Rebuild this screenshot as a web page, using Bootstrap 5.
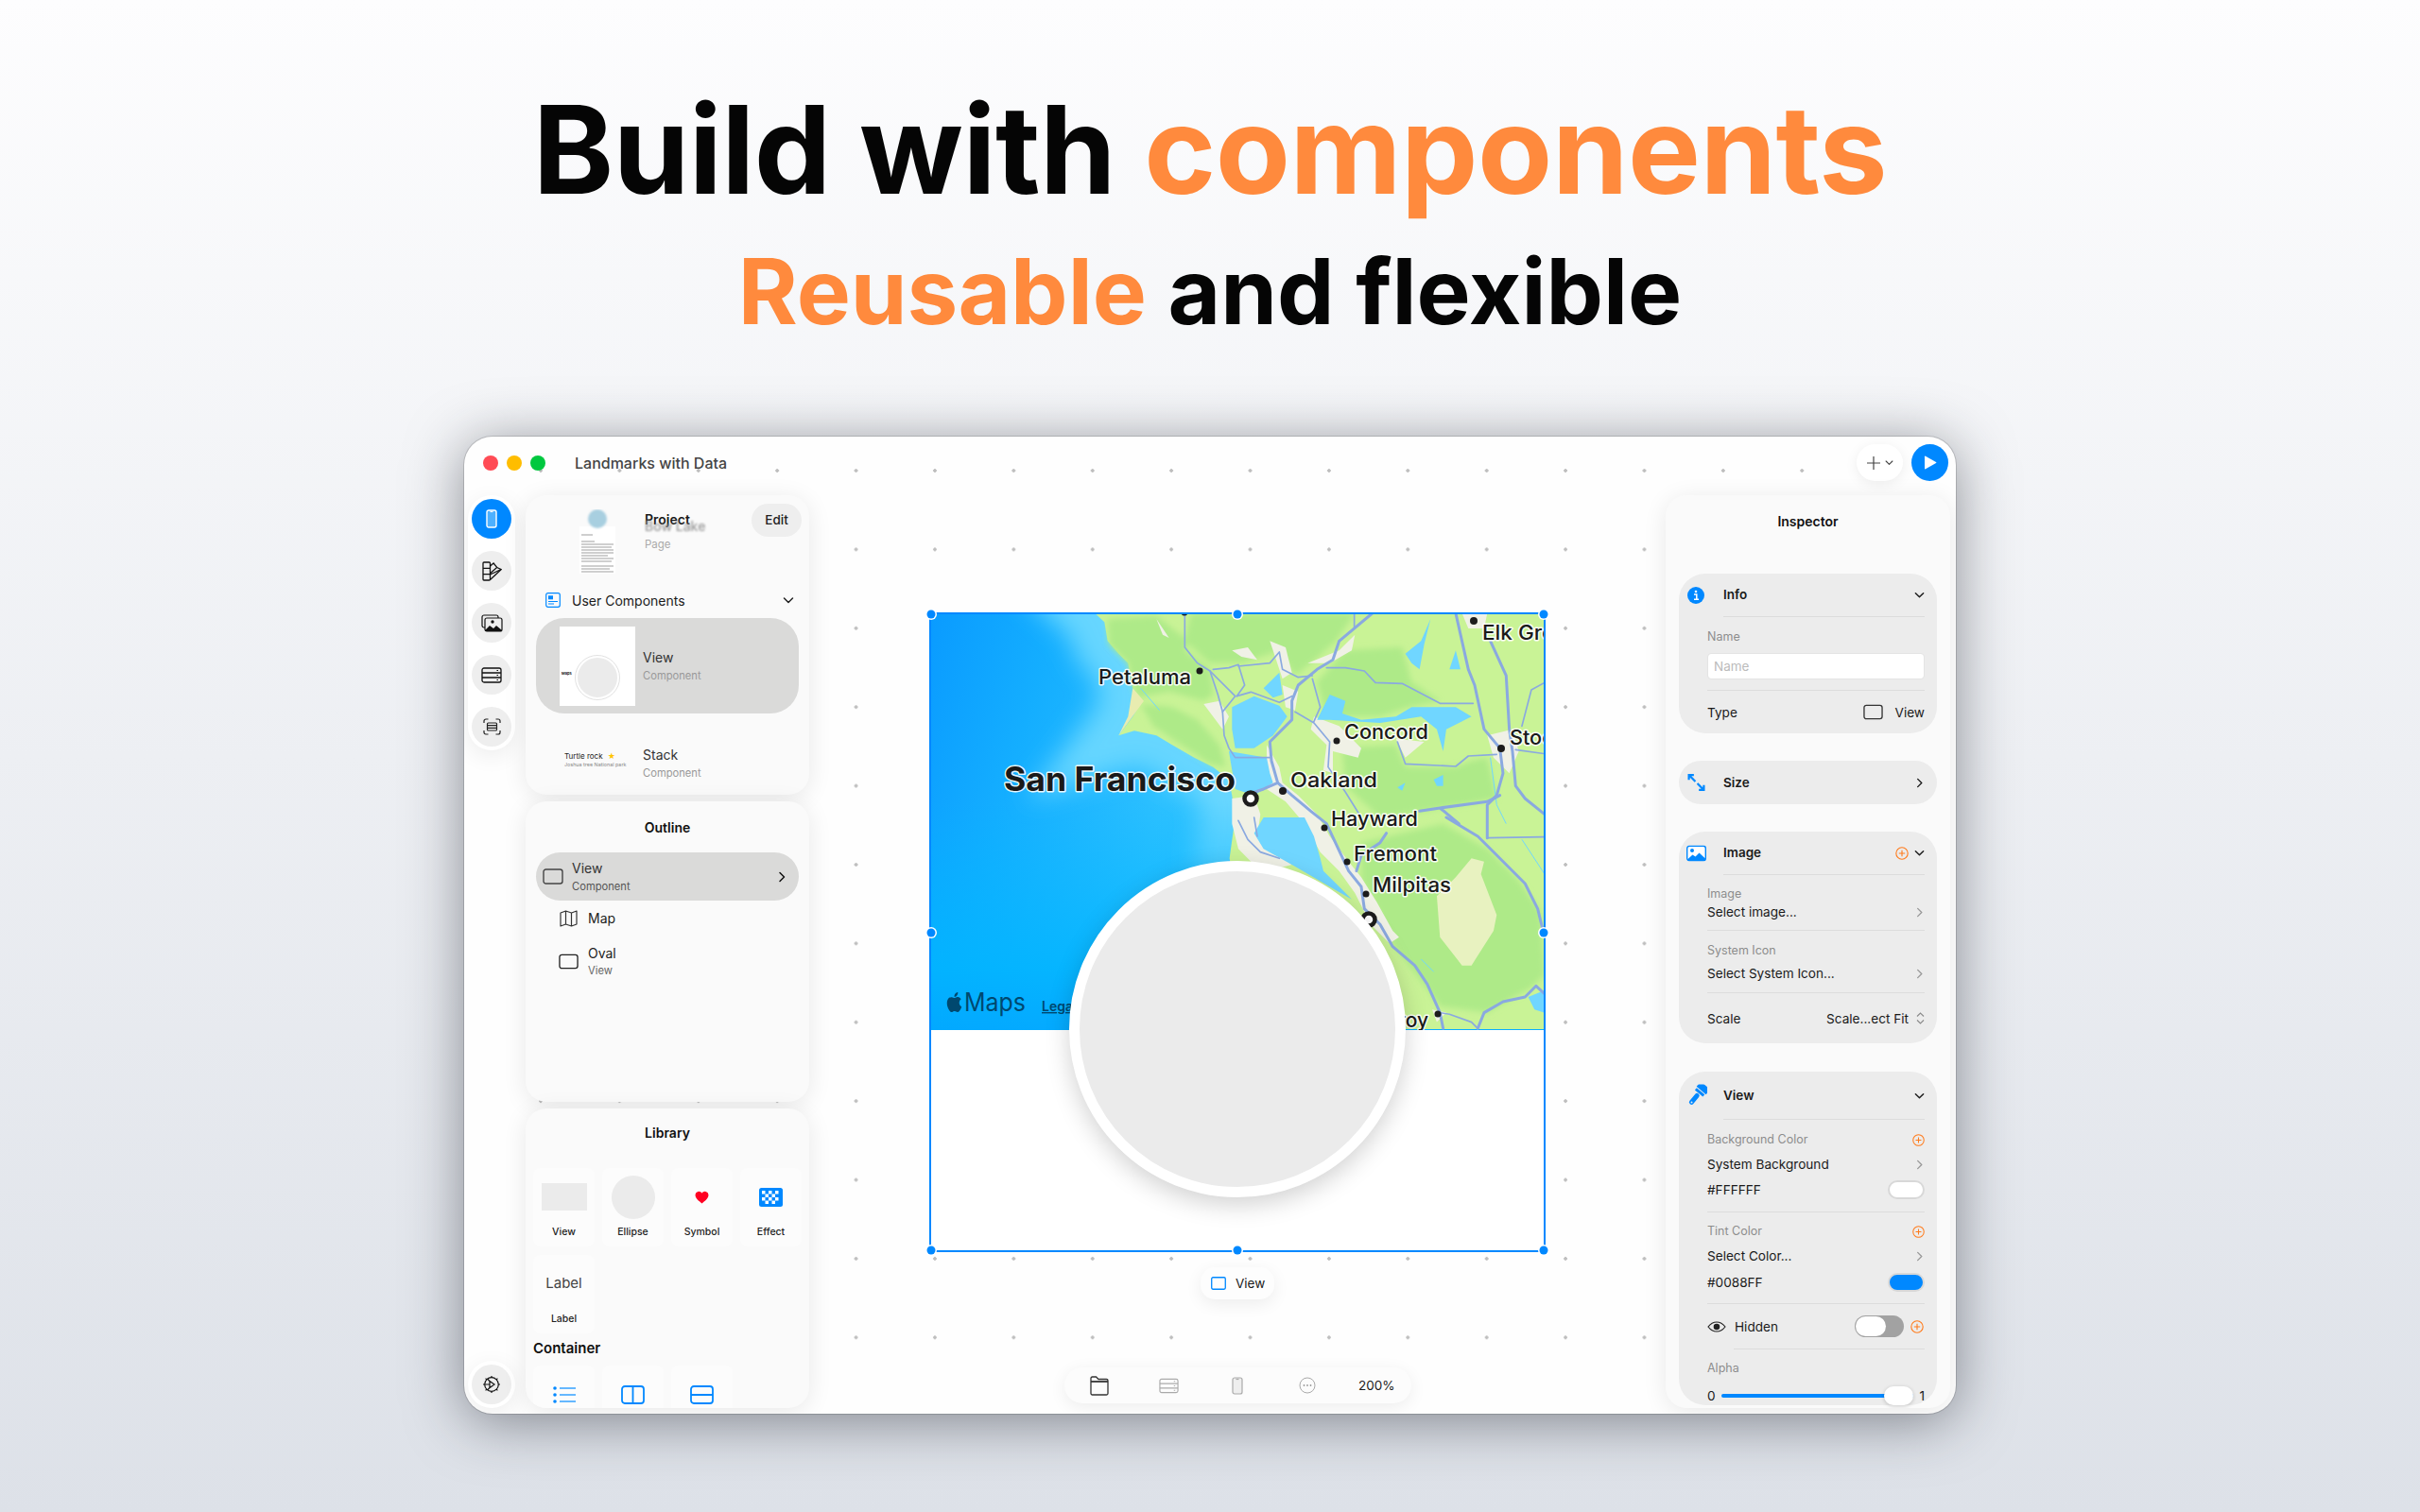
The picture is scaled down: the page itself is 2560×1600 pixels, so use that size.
<!DOCTYPE html>
<html lang="en">
<head>
<meta charset="UTF-8" />
<meta name="viewport" content="width=device-width, initial-scale=1.0" />
<title>Build with components</title>
<link rel="stylesheet" href="https://cdn.jsdelivr.net/npm/bootstrap@5.3.0/dist/css/bootstrap.min.css" />
<style>
  html, body { height: 100%; }
  body {
    width: 2560px; height: 1600px; overflow: hidden; margin: 0;
    background: linear-gradient(#fdfdfe, #dde1e8);
    font-family: Inter, "Liberation Sans", sans-serif; color: #1a1a1a; font-size: 14px;
  }
  .promo { height: 462px; text-align: center; font-weight: 700; color: #050505; padding-top: 84px; }
  .promo-one { font-size: 129.3px; line-height: 148px; letter-spacing: -.5px; margin: 0; font-weight: 700; }
  .promo-two { font-size: 96px; line-height: 112px; margin: 20px 0 0; font-weight: 700; }
  .hot { color: #ff8a3d; }

  .app-win {
    width: 1578px; height: 1034px; margin-left: 491px; border-radius: 30px; overflow: hidden;
    background-color: #fefefe;
    background-image: radial-gradient(circle, #bdbdbd 1.5px, transparent 2.1px);
    background-size: 83.4px 83.4px; background-position: 39.3px -5.7px;
    box-shadow: 0 0 0 1px rgba(0,0,0,.14), 0 8px 60px rgba(35,40,50,.5);
  }
  .title-bar { height: 62px; padding: 8px 8px 0 20px; }
  .light { width: 16px; height: 16px; border-radius: 50%; margin-right: 9px; }
  .app-title { margin-left: 22px; font-size: 16px; font-weight: 500; color: #444; }
  .add-pill { width: 49px; height: 39px; border-radius: 20px; background: #fff; box-shadow: 0 3px 14px rgba(0,0,0,.07); }
  .play-btn { width: 39px; height: 39px; border-radius: 50%; background: #0088ff; margin-left: 9px; }

  .work { height: 972px; padding: 0 6px 6px 4px; }
  .rail { width: 50px; }
  .rail-pill { background: #fff; border-radius: 25px; padding: 4px; display: flex; flex-direction: column; gap: 13px; box-shadow: 0 6px 24px rgba(0,0,0,.07); }
  .rail-btn { width: 42px; height: 42px; border-radius: 50%; background: #eee; display: flex; align-items: center; justify-content: center; }
  .rail-btn.on { background: #0088ff; }

  .side { width: 300px; margin-left: 11px; gap: 7px; }
  .sheet { background: #fafafa; border-radius: 22px; overflow: hidden; box-shadow: 0 4px 26px rgba(0,0,0,.09); }
  .side .sheet { height: 317.3px; }
  .sheet-title { height: 54px; display: flex; align-items: center; justify-content: center; font-weight: 600; font-size: 14px; color: #111; margin-right: 0; }

  .proj-head { height: 92px; }
  .page-thumb { width: 38px; height: 68px; margin: 15px 0 0 57px; }
  .proj-text { margin: 17px 0 0 31px; }
  .proj-name { font-weight: 600; font-size: 14px; line-height: 18px; }
  .proj-blur { font-size: 14px; line-height: 16px; margin-top: -10px; color: #999; filter: blur(.8px); font-weight: 500; }
  .proj-page { font-size: 11.5px; line-height: 16px; color: #aaa; margin-top: 3px; }
  .edit-btn { margin: 9px 8px 0 auto; width: 53px; height: 35px; padding: 0; border: 0; border-radius: 18px; background: #eee; font-size: 13.5px; font-weight: 500; color: #222; }
  .group-head { height: 38px; padding: 0 16px 0 21px; gap: 12px; font-size: 14px; }

  .picked { background: #dadad9; }
  .comp-item { height: 101px; margin: 0 11px; border-radius: 30px; padding-left: 25px; gap: 8px; }
  .comp-thumb { width: 80px; height: 84px; background: #fff; position: relative; flex: none; }
  .comp-thumb.plain { background: transparent; padding-left: 5px; }
  .mini-circle { position: absolute; left: 17px; top: 31px; width: 46px; height: 46px; border-radius: 50%; background: #ebebeb; border: 2px solid #fff; outline: 1px solid #e2e2e2; }
  .mini-maps { position: absolute; left: 2px; top: 47px; font-size: 4px; line-height: 6px; color: #000; font-weight: 600; }
  .item-main { font-size: 14px; line-height: 18px; color: #333; }
  .item-sub { font-size: 11.2px; line-height: 16px; color: #999; margin-top: 2px; }
  .turtle { font-size: 8px; line-height: 10px; color: #222; margin-top: 29px; white-space: nowrap; }
  .turtle i { color: #ffc400; font-style: normal; margin-left: 3px; }
  .joshua { font-size: 5.4px; line-height: 8px; color: #888; white-space: nowrap; }

  .tree-main { height: 51px; margin: 0 11px; border-radius: 26px; padding: 0 12px 0 7px; gap: 9px; }
  .tree-main .item-sub { color: #555; margin-top: 2px; }
  .tree-main .item-main, .tree-kid .item-main { line-height: 18px; }
  .tree-kid { margin-left: 35px; gap: 10px; }
  .tree-kid .item-sub { color: #666; margin-top: 1px; }

  .lib-grid { display: grid; grid-template-columns: repeat(4, 65px); gap: 9px 8px; padding-left: 8px; }
  .lib-cell { height: 83px; background: #fcfcfc; border-radius: 8px; text-align: center; }
  .lib-art { height: 62px; display: flex; align-items: center; justify-content: center; }
  .lib-name { font-size: 10.5px; line-height: 12px; color: #222; font-weight: 500; }
  .lib-rect { width: 48px; height: 29px; background: #ebebeb; }
  .lib-oval { width: 46px; height: 46px; border-radius: 50%; background: #ebebeb; }
  .lib-label { font-size: 15px; color: #444; }
  .lib-section { font-size: 15px; font-weight: 600; line-height: 20px; padding-left: 8px; margin: 6px 0 8px; color: #111; }

  .canvas { position: relative; }
  .sel-box { position: absolute; left: 127px; top: 124px; width: 652px; height: 677px; background: #fff; border: 2px solid #0088ff; }
  .sel-box svg { display: block; }
  .map-text { font-family: Inter, sans-serif; font-weight: 500; fill: #1a1a1a; stroke: #fff; stroke-width: 3px; paint-order: stroke; stroke-linejoin: round; stroke-opacity: .9; }
  .handle { position: absolute; width: 9px; height: 9px; border-radius: 50%; background: #0088ff; box-shadow: 0 0 0 1.5px #fff; transform: translate(-50%, -50%); }
  .lens { position: absolute; left: 275px; top: 387px; width: 356px; height: 356px; border-radius: 50%; background: #ebebeb; border: 11px solid #fff; box-shadow: 0 8px 26px rgba(0,0,0,.18); }
  .view-chip { position: absolute; left: 414px; top: 817px; width: 78px; height: 34px; border-radius: 15px; background: #fdfdfd; gap: 10px; padding-left: 11px; font-size: 13.5px; box-shadow: 0 5px 18px rgba(0,0,0,.07); }
  .dock { position: absolute; left: 270px; bottom: 5px; width: 367px; height: 38px; border-radius: 19px; background: #fcfcfc; box-shadow: 0 4px 18px rgba(0,0,0,.07); }
  .dock-item { width: 73.4px; display: flex; justify-content: center; align-items: center; font-size: 13.5px; }

  .inspector { width: 301px; height: 966px; padding: 0 14px; }
  .inspector .sheet-title { height: 54px; margin-bottom: 29px; }
  .pane { background: #ececec; border-radius: 28px; padding: 0 13px 0 30px; margin-bottom: 29px; }
  .pane-head { height: 46px; margin-left: 17px; border-bottom: 1px solid #dcdcdc; font-weight: 600; font-size: 13.5px; position: relative; }
  .pane-head.flat { border: 0; }
  .pane-icon { position: absolute; left: -38px; top: 50%; transform: translateY(-50%); }
  .cap { font-size: 12.5px; line-height: 18px; color: #8c8c8c; }
  .val { font-size: 13.6px; line-height: 20px; color: #1a1a1a; }
  .rule { border-top: 1px solid #dcdcdc; }
  .name-input { height: 28px; min-height: 0; margin-top: 8px; padding: 0 6px; font-size: 13.5px; border: 1px solid #e4e4e4; border-radius: 4px; font-family: inherit; }
  .name-input::placeholder { color: #bbb; }
  .swatch { width: 39px; height: 20px; border-radius: 10px; border: 2.5px solid #d8d8d8; }
  .toggle-off { width: 52px; height: 23px; border-radius: 12px; background: #a2a2a2; position: relative; }
  .toggle-off::before { content: ""; position: absolute; left: 1px; top: 1px; width: 32px; height: 21px; border-radius: 11px; background: #fff; }
  .range-line { position: relative; flex: 1; height: 4px; border-radius: 2px; background: #0088ff; margin: 0 6px; }
  .range-knob { position: absolute; right: 0; top: -8px; width: 31px; height: 20px; border-radius: 10px; background: #fff; box-shadow: 0 1px 4px rgba(0,0,0,.2); }
</style>
</head>
<body>
<svg width="0" height="0" class="position-absolute">
  <defs>
    <symbol id="chev-d" viewBox="0 0 12 12"><path d="M1.5 4l4.5 4.5L10.5 4" fill="none" stroke="currentColor" stroke-width="1.5" stroke-linecap="round" stroke-linejoin="round"/></symbol>
    <symbol id="chev-r" viewBox="0 0 12 12"><path d="M4 1.5L8.5 6 4 10.5" fill="none" stroke="currentColor" stroke-width="1.5" stroke-linecap="round" stroke-linejoin="round"/></symbol>
    <symbol id="plus-o" viewBox="0 0 14 14"><circle cx="7" cy="7" r="6.2" fill="none" stroke="#ff7a1a" stroke-width="1.1"/><path d="M7 3.8v6.4M3.8 7h6.4" stroke="#ff7a1a" stroke-width="1.1"/></symbol>
    <symbol id="box" viewBox="0 0 22 17"><rect x="1" y="1" width="20" height="15" rx="2.5" fill="none" stroke="currentColor" stroke-width="1.4"/></symbol>
  </defs>
</svg>

<header class="promo">
  <h1 class="promo-one">Build with <span class="hot">components</span></h1>
  <h2 class="promo-two"><span class="hot">Reusable</span> and flexible</h2>
</header>

<div class="app-win">
  <div class="title-bar d-flex">
    <div class="d-flex align-items-center w-100" style="height:39px">
      <span class="light" style="background:#ff4b55"></span>
      <span class="light" style="background:#ffbd00"></span>
      <span class="light" style="background:#00c83f"></span>
      <span class="app-title">Landmarks with Data</span>
      <div class="add-pill ms-auto d-flex align-items-center justify-content-center gap-1">
        <svg width="16" height="16" viewBox="0 0 16 16"><path d="M8 1v14M1 8h14" stroke="#444" stroke-width="1.2"/></svg>
        <svg width="9" height="9" style="color:#444"><use href="#chev-d"/></svg>
      </div>
      <div class="play-btn d-flex align-items-center justify-content-center">
        <svg width="14" height="15" viewBox="0 0 14 15"><path d="M1 1.3v12.4a.7.7 0 0 0 1 .6l11-6.2a.7.7 0 0 0 0-1.2L2 .7a.7.7 0 0 0-1 .6z" fill="#fff"/></svg>
      </div>
    </div>
  </div>

  <div class="work d-flex">
    <nav class="rail d-flex flex-column justify-content-between flex-shrink-0">
      <div class="rail-pill">
        <div class="rail-btn on">
          <svg width="12" height="20" viewBox="0 0 12 20"><rect x="1" y="1" width="10" height="18" rx="2" fill="#4db0ff" stroke="#fff" stroke-width="1.4"/><path d="M4.5 2.6h3" stroke="#fff"/></svg>
        </div>
        <div class="rail-btn">
          <svg width="21" height="21" viewBox="0 0 21 21" fill="none" stroke="#111" stroke-width="1.3"><rect x="1" y="1" width="7.5" height="19" rx="1"/><path d="M1 7.3h7.5M1 13.6h7.5"/><path d="M8.5 5l3.6-3 3.6 4.4-7.2 6.4M8.5 14l11.5-5.5-4.3-2"/><path d="M8.5 19.5L20 8.8"/></svg>
        </div>
        <div class="rail-btn">
          <svg width="23" height="19" viewBox="0 0 23 19"><rect x="1" y="1" width="17" height="13" rx="2" fill="none" stroke="#111" stroke-width="1.2"/><rect x="4" y="4" width="18" height="14" rx="2" fill="#eee" stroke="#111" stroke-width="1.2"/><circle cx="12" cy="8" r="1.7" fill="#111"/><path d="M4 17l5-5 4 3 3-3 6 5v1H4z" fill="#111"/></svg>
        </div>
        <div class="rail-btn">
          <svg width="22" height="17" viewBox="0 0 22 17" fill="none" stroke="#111" stroke-width="1.3"><rect x="1" y="1" width="20" height="15" rx="2"/><path d="M1 6h20M1 11h20"/><path d="M16.5 3.5h1.5M16.5 8.500h1.500M16.500 13.500h1.500" stroke-width="1.200"/></svg>
        </div>
        <div class="rail-btn">
          <svg width="19" height="18" viewBox="0 0 19 18" fill="none" stroke="#222" stroke-width="1.2"><path d="M1 5V3a2 2 0 0 1 2-2h2.500M13.500 1H16a2 2 0 0 1 2 2v2M18 13v2a2 2 0 0 1-2 2h-2.500M5.500 17H3a2 2 0 0 1-2-2v-2"/><rect x="4.500" y="5" width="10" height="8" rx="1"/><path d="M4.500 7.700h10M4.500 10.300h10"/></svg>
        </div>
      </div>
      <div class="rail-pill">
        <div class="rail-btn">
          <svg width="20" height="20" viewBox="0 0 20 20" fill="none" stroke="#111" stroke-width="1.2"><circle cx="10" cy="10" r="7.300"/><path d="M10 1v1.600M10 17.400V19M1 10h1.600M17.400 10H19M3.600 3.600l1.200 1.200M15.200 15.200l1.200 1.200M3.600 16.400l1.200-1.200M15.200 4.800l1.200-1.200"/><path d="M8 6.500L13 10 8 13.500zM3 10h5M5.500 4l2.500 2.500M5.500 16l2.500-2.500"/></svg>
        </div>
      </div>
    </nav>

    <aside class="side d-flex flex-column flex-shrink-0">
      <section class="sheet">
        <div class="proj-head d-flex">
          <svg class="page-thumb flex-shrink-0" viewBox="0 0 38 68">
            <defs><filter id="soft"><feGaussianBlur stdDeviation="1.200"/></filter></defs>
            <rect x="0" y="18" width="38" height="50" fill="#fff"/>
            <circle cx="19" cy="10" r="10" fill="#a8cfe0" filter="url(#soft)"/>
            <g stroke="#777" stroke-width=".7">
              <path d="M2 27h12M2 34h14M2 37h34M2 40h32M2 43h34M2 46h34M2 49h28M2 52h34M2 55h32M2 60h34M2 63h30M2 66h34"/>
            </g>
          </svg>
          <div class="proj-text">
            <div class="proj-name">Project</div>
            <div class="proj-blur">Bow Lake</div>
            <div class="proj-page">Page</div>
          </div>
          <button class="btn edit-btn">Edit</button>
        </div>
        <div class="group-head d-flex align-items-center">
          <svg width="16" height="16" viewBox="0 0 16 16" fill="none"><rect x=".7" y=".7" width="14.600" height="14.600" rx="2" stroke="#0088ff" stroke-width="1.200"/><rect x="3" y="3.300" width="5" height="4" fill="#0088ff"/><path d="M3 9.500h10M3 12h6" stroke="#0088ff" stroke-width="1.200"/></svg>
          <span>User Components</span>
          <svg class="ms-auto" width="12" height="12" style="color:#222"><use href="#chev-d"/></svg>
        </div>
        <div class="comp-item picked d-flex align-items-center">
          <div class="comp-thumb"><span class="mini-maps">Maps</span><span class="mini-circle"></span></div>
          <div><div class="item-main">View</div><div class="item-sub">Component</div></div>
        </div>
        <div class="comp-item d-flex align-items-center" style="margin-top:2px">
          <div class="comp-thumb plain">
            <div class="turtle">Turtle rock <i>★</i></div>
            <div class="joshua">Joshua tree National park</div>
          </div>
          <div><div class="item-main">Stack</div><div class="item-sub">Component</div></div>
        </div>
      </section>

      <section class="sheet">
        <div class="sheet-title">Outline</div>
        <div class="tree-main picked d-flex align-items-center">
          <svg width="22" height="17" style="color:#444"><use href="#box"/></svg>
          <div><div class="item-main">View</div><div class="item-sub">Component</div></div>
          <svg class="ms-auto" width="12" height="12" style="color:#111"><use href="#chev-r"/></svg>
        </div>
        <div class="tree-kid d-flex align-items-center" style="height:38px">
          <svg width="21" height="18" viewBox="0 0 21 18" fill="none" stroke="#333" stroke-width="1.200" stroke-linejoin="round"><path d="M2 3l5.500-2 6 2 5.500-2v14l-5.500 2-6-2-5.500 2zM7.500 1v14M13.500 3v14"/></svg>
          <span class="item-main" style="color:#222">Map</span>
        </div>
        <div class="tree-kid d-flex align-items-center" style="height:53px">
          <svg width="21" height="17" style="color:#222"><use href="#box"/></svg>
          <div><div class="item-main" style="color:#222">Oval</div><div class="item-sub">View</div></div>
        </div>
      </section>

      <section class="sheet">
        <div class="sheet-title" style="height:52px">Library</div>
        <div class="lib-grid" style="margin-top:11px">
          <div class="lib-cell"><div class="lib-art"><div class="lib-rect"></div></div><div class="lib-name">View</div></div>
          <div class="lib-cell"><div class="lib-art"><div class="lib-oval"></div></div><div class="lib-name">Ellipse</div></div>
          <div class="lib-cell"><div class="lib-art"><svg width="15" height="14" viewBox="0 0 15 14"><path d="M7.500 13.500C2.500 9.500 .5 7.500.5 4.500A3.800 3.800 0 0 1 7.500 2.500a3.800 3.800 0 0 1 7 2c0 3-2 5-7 9z" fill="#ff0022"/></svg></div><div class="lib-name">Symbol</div></div>
          <div class="lib-cell"><div class="lib-art"><svg width="25" height="20" viewBox="0 0 25 20"><rect width="25" height="20" rx="2.500" fill="#0088ff"/><g fill="#fff"><rect x="3" y="3" width="3.500" height="3.500"/><rect x="10" y="3" width="3.500" height="3.500"/><rect x="17" y="3" width="3.500" height="3.500"/><rect x="6.500" y="6.500" width="3.500" height="3.500"/><rect x="13.500" y="6.500" width="3.500" height="3.500"/><rect x="3" y="10" width="3.500" height="3.500"/><rect x="10" y="10" width="3.500" height="3.500"/><rect x="17" y="10" width="3.500" height="3.500"/><rect x="6.500" y="13.500" width="3.500" height="3.500"/><rect x="13.500" y="13.500" width="3.500" height="3.500"/></g></svg></div><div class="lib-name">Effect</div></div>
          <div class="lib-cell"><div class="lib-art"><span class="lib-label">Label</span></div><div class="lib-name">Label</div></div>
        </div>
        <div class="lib-section">Container</div>
        <div class="lib-grid">
          <div class="lib-cell"><div class="lib-art"><svg width="24" height="18" viewBox="0 0 24 18"><g fill="#0088ff"><circle cx="2" cy="2" r="1.800"/><circle cx="2" cy="9" r="1.800"/><circle cx="2" cy="16" r="1.800"/></g><path d="M7 2h17M7 9h17M7 16h17" stroke="#66b8ff" stroke-width="1.800"/></svg></div></div>
          <div class="lib-cell"><div class="lib-art"><svg width="25" height="20" viewBox="0 0 25 20" fill="none" stroke="#0088ff" stroke-width="1.800"><rect x="1" y="1" width="23" height="18" rx="3"/><path d="M12.500 1v18"/></svg></div></div>
          <div class="lib-cell"><div class="lib-art"><svg width="25" height="20" viewBox="0 0 25 20" fill="none" stroke="#0088ff" stroke-width="1.800"><rect x="1" y="1" width="23" height="18" rx="3"/><path d="M1 10h23"/></svg></div></div>
        </div>
      </section>
    </aside>

    <main class="canvas flex-grow-1">
      <div class="sel-box">
        <svg width="648" height="440" viewBox="985 650 648 440" preserveAspectRatio="none" style="width:100%">
          <defs>
            <linearGradient id="sea" x1="0" x2="1" y1="0" y2=".2"><stop offset="0" stop-color="#0a9bff"/><stop offset=".2" stop-color="#14aeff"/><stop offset=".45" stop-color="#2cc0ff"/><stop offset="1" stop-color="#40ccff"/></linearGradient>
            <linearGradient id="sea-low" x1="0" x2="0" y1="0" y2="1"><stop offset=".45" stop-color="#00b4ff" stop-opacity="0"/><stop offset=".85" stop-color="#00b4ff" stop-opacity=".85"/><stop offset="1" stop-color="#00a8ff" stop-opacity=".9"/></linearGradient>
            <filter id="coast" x="-30%" y="-30%" width="160%" height="160%"><feGaussianBlur stdDeviation="40"/></filter>
            <filter id="land-soft"><feGaussianBlur stdDeviation="1.500"/></filter>
            <filter id="hill-soft" x="-10%" y="-10%" width="120%" height="120%"><feGaussianBlur stdDeviation="9"/></filter>
            <path id="shore" d="M55 12L85 40 95 100 130 140 160 170 175 250 205 290 175 340 130 400 180 385 250 400 300 430 370 470 430 500 480 540 490 590 500 660 482 790 520 1000 1000 1332 1482 1332 1482 12z"/>
          </defs>
          <rect x="984" y="649" width="650" height="441" fill="url(#sea)"/>
          <g transform="translate(1140 645) scale(.3333)">
            <use href="#shore" fill="none" stroke="#66d6ff" stroke-width="220" filter="url(#coast)"/>
          </g>
          <rect x="984" y="649" width="650" height="441" fill="url(#sea-low)"/>
          <g transform="translate(1140 645) scale(.3333)">
            <g filter="url(#land-soft)">
              <use href="#shore" fill="#c9f396"/>
              <g fill="#aeea88" filter="url(#hill-soft)">
                <path d="M95 30L250 20 350 100 340 130 420 190 430 270 400 290 290 260 190 280 175 240 160 170 130 140 100 110z"/>
                <path d="M200 300L300 310 380 350 450 430 470 500 420 490 330 430 240 370z"/>
                <path d="M360 12L880 12 820 100 740 170 690 210 640 130 520 170 420 170 340 100z"/>
                <path d="M760 230L850 130 1030 120 1060 230 1150 290 1050 310 960 340 790 340z"/>
                <path d="M840 440L1010 430 1040 500 1200 500 1250 480 1300 470 1330 600 1100 640 960 660 850 560z"/>
                <path d="M900 740L1160 680 1300 760 1400 860 1470 960 1482 1160 1440 1200 1300 1280 1150 1260 1060 1140 1000 1060 950 950 900 860z"/>
              </g>
              <path d="M1250 790L1290 800 1280 840 1330 970 1320 1020 1250 1130 1220 1130 1150 1040 1140 910 1200 850z" fill="#e8f2c0"/>
              <g fill="#f0f1e6">
                <path d="M600 430L640 500 650 550 700 590 760 650 800 720 860 800 900 850 950 930 1000 1020 1020 1040 990 1060 930 1000 880 900 830 830 770 770 720 680 660 610 600 570z"/>
                <path d="M750 340L830 370 900 440 890 470 810 450 810 520 780 510 790 430 740 380z"/>
                <path d="M1220 12L1300 12 1290 60 1240 60z"/>
                <path d="M1300 400L1380 380 1400 450 1370 520 1320 470z"/>
                <path d="M1010 410L1100 420 1040 470z"/>
                <path d="M490 600L560 590 580 650 570 720 620 770 680 810 600 830 550 800 510 760 490 680z"/>
                <path d="M400 300L450 290 480 340 460 380z"/>
                <path d="M610 100L660 120 680 200 650 220 620 130z"/>
                <path d="M490 130L540 120 570 160 520 150z"/>
                <path d="M730 170L830 130 880 80 870 130 800 170z"/>
                <path d="M650 240L700 260 690 320 660 310z"/>
                <path d="M250 30L290 90 270 80z"/>
                <path d="M1125 1270L1170 1280 1140 1310z"/>
              </g>
              <path d="M175 250L210 290 130 400 160 340z" fill="#e8ecb0"/>
              <g fill="#6fd6ff">
                <path d="M490 310L560 275 640 305 665 340 620 400 560 440 500 440 490 380z"/>
                <path d="M480 450L600 470 610 520 620 550 560 590 500 570z"/>
                <path d="M590 660L720 660 750 720 770 790 780 830 830 880 870 920 800 880 680 810 590 760 560 710z"/>
                <path d="M760 350L800 270 850 290 840 330 900 350 1010 340 1060 310 1200 310 1250 340 1170 380 1160 450 1140 380 1090 340 960 360 800 350z"/>
                <path d="M1040 140L1090 100 1120 30 1100 110 1085 190 1060 170z"/>
                <path d="M1180 190L1200 130 1215 190z"/>
                <path d="M590 250L640 200 650 270 620 280z"/>
                <path d="M1130 540L1160 525 1160 560 1140 560z"/>
                <path d="M1430 1230L1480 1210 1480 1280 1450 1270z"/>
                <path d="M1015 565L1040 550 1030 575z"/>
              </g>
              <g fill="none" stroke="#6fd6ff" stroke-width="3"><path d="M1310 470L1330 620M1330 620L1360 680M1410 730L1482 840M1090 1110L1130 1150M200 250L260 320"/></g>
            </g>
            <g fill="none" stroke="#8aa9e0" stroke-linejoin="round" stroke-linecap="round">
              <g stroke-width="5">
                <path d="M340 12L340 120 380 170 420 195 500 275 460 325 465 400 480 440 500 470 610 470"/>
                <path d="M420 195L445 270 460 325M430 190L480 185 510 175 530 240 505 275M510 180L610 170 640 135 650 190 700 215 745 210"/>
                <path d="M505 275L550 262 640 295 680 275M745 220L770 310 750 355M690 325L750 360 800 420 795 500 850 580 900 660"/>
                <path d="M790 185L850 185 910 195 945 232 1030 235 1150 298 1255 298"/>
                <path d="M1015 420L1040 490 1200 498 1240 465 1330 460M1390 445L1482 458M1410 370L1440 255 1482 232M878 12L878 60"/>
                <path d="M510 670L540 730 580 770 640 790M560 660L570 720M1150 1280L1180 1285 1250 1310 1270 1330"/>
                <path d="M1300 725L1482 722"/>
              </g>
              <g stroke-width="9">
                <path d="M935 12L830 100 810 160 760 190 700 240 680 290 680 350 610 420 615 480 635 550 590 570 530 590"/>
                <path d="M635 550L680 590 740 640 790 680 860 830 900 880 910 950 960 1000 1000 1070 1070 1130 1110 1190 1150 1280 1160 1330"/>
                <path d="M1200 12L1240 190 1260 240 1290 380 1340 440 1350 520 1330 590 1300 620 1300 725"/>
                <path d="M1310 100L1360 210 1370 380 1380 450 1390 560 1420 600 1482 650"/>
                <path d="M1170 660L1270 720 1310 760 1420 870 1460 950 1482 1040"/>
                <path d="M1085 640L1150 630 1210 680M1150 630L1300 610 1340 590"/>
                <path d="M980 710L960 740 900 780 885 830"/>
                <path d="M1270 1330L1290 1280 1350 1245 1420 1230 1455 1195 1482 1220"/>
              </g>
            </g>
          </g>
          <g fill="#1c1c1c">
            <circle cx="1253" cy="648" r="3.500"/><circle cx="1269" cy="710" r="3.500"/><circle cx="1414" cy="784" r="3.500"/>
            <circle cx="1559" cy="657" r="4"/><circle cx="1588" cy="792" r="4"/><circle cx="1357" cy="837" r="4"/>
            <circle cx="1401" cy="876" r="3.500"/><circle cx="1425" cy="912" r="3.500"/><circle cx="1445" cy="946" r="3.500"/><circle cx="1521" cy="1073" r="3.500"/>
          </g>
          <circle cx="1323" cy="845" r="6.500" fill="#fff" stroke="#1c1c1c" stroke-width="4.500"/>
          <circle cx="1448" cy="973" r="6.500" fill="#fff" stroke="#1c1c1c" stroke-width="4.500"/>
          <g class="map-text" font-size="21">
            <text x="1162" y="724" textLength="98" lengthAdjust="spacingAndGlyphs">Petaluma</text>
            <text x="1422" y="782" textLength="89" lengthAdjust="spacingAndGlyphs">Concord</text>
            <text x="1365" y="833" textLength="92" lengthAdjust="spacingAndGlyphs">Oakland</text>
            <text x="1408" y="874" textLength="92" lengthAdjust="spacingAndGlyphs">Hayward</text>
            <text x="1432" y="911" textLength="88" lengthAdjust="spacingAndGlyphs">Fremont</text>
            <text x="1452" y="944" textLength="83" lengthAdjust="spacingAndGlyphs">Milpitas</text>
            <text x="1568" y="677" textLength="102" lengthAdjust="spacingAndGlyphs">Elk Grove</text>
            <text x="1597" y="788" textLength="92" lengthAdjust="spacingAndGlyphs">Stockton</text>
            <text x="1511" y="1087" text-anchor="end">Gilroy</text>
            <text x="1062" y="837" font-size="35" font-weight="700" textLength="245" lengthAdjust="spacingAndGlyphs">San Francisco</text>
          </g>
          <svg x="1000" y="1050" width="19" height="21" viewBox="0 0 16 16" preserveAspectRatio="none"><path fill="#00486f" d="M11.182.008C11.148-.03 9.923.023 8.857 1.18c-1.066 1.156-.902 2.482-.878 2.516.024.034 1.52.087 2.475-1.258.955-1.345.762-2.391.728-2.43zm3.314 11.733c-.048-.096-2.325-1.234-2.113-3.422.212-2.189 1.675-2.789 1.698-2.854.023-.065-.597-.79-1.254-1.157a3.692 3.692 0 0 0-1.563-.434c-.108-.003-.483-.095-1.254.116-.508.139-1.653.589-1.968.607-.316.018-1.256-.522-2.267-.665-.647-.1-1.333.105-1.824.303-.49.197-1.422.759-2.074 2.242-.652 1.482-.311 3.83-.067 4.56.244.729.625 1.924 1.273 2.796.576.984 1.34 1.667 1.659 1.899.319.232 1.219.386 1.843.067.502-.308 1.408-.485 1.766-.472.357.013 1.061.154 1.782.539.571.197 1.111.115 1.652-.105.541-.221 1.324-1.059 2.238-2.758.347-.79.505-1.217.473-1.282z"/></svg>
          <text x="1020" y="1070" font-family="Inter, sans-serif" font-size="27" fill="#00486f" textLength="65" lengthAdjust="spacingAndGlyphs">Maps</text>
          <text x="1102" y="1070" font-family="Inter, sans-serif" font-size="14" font-weight="600" fill="#00486f" text-decoration="underline">Legal</text>
        </svg>
        <span class="handle" style="left:0;top:0"></span>
        <span class="handle" style="left:50%;top:0"></span>
        <span class="handle" style="left:100%;top:0"></span>
        <span class="handle" style="left:0;top:50%"></span>
        <span class="handle" style="left:100%;top:50%"></span>
        <span class="handle" style="left:0;top:100%"></span>
        <span class="handle" style="left:50%;top:100%"></span>
        <span class="handle" style="left:100%;top:100%"></span>
      </div>
      <div class="lens"></div>
      <div class="view-chip d-flex align-items-center">
        <svg width="16" height="14" viewBox="0 0 22 19" preserveAspectRatio="none" style="color:#0088ff"><rect x="1" y="1" width="20" height="17" rx="2" fill="none" stroke="currentColor" stroke-width="1.800"/></svg>
        <span>View</span>
      </div>
      <div class="dock d-flex align-items-center">
        <div class="dock-item"><svg width="20" height="21" viewBox="0 0 20 21" fill="none" stroke="#333" stroke-width="1.300"><path d="M1 4V2.500A1.500 1.500 0 0 1 2.500 1h4L9 3.500h8.500A1.500 1.500 0 0 1 19 5v13.500a1.500 1.500 0 0 1-1.500 1.500h-15A1.500 1.500 0 0 1 1 18.500z"/><path d="M1 6h18" stroke-width="1.800"/></svg></div>
        <div class="dock-item"><svg width="21" height="17" viewBox="0 0 22 17" fill="none" stroke="#aaa" stroke-width="1.200"><rect x="1" y="1" width="20" height="15" rx="2"/><path d="M1 6h20M1 11h20M16.500 3.500h1.500M16.500 8.500h1.500M16.500 13.500h1.500"/></svg></div>
        <div class="dock-item"><svg width="12" height="19" viewBox="0 0 12 19" fill="#eee" stroke="#aaa" stroke-width="1.200"><rect x="1" y="1" width="10" height="17" rx="2"/><path d="M4.500 2.500h3"/></svg></div>
        <div class="dock-item"><svg width="18" height="18" viewBox="0 0 18 18" fill="none" stroke="#aaa" stroke-width="1"><circle cx="9" cy="9" r="8"/><g fill="#999" stroke="none"><circle cx="5.500" cy="9" r=".9"/><circle cx="9" cy="9" r=".9"/><circle cx="12.500" cy="9" r=".9"/></g></svg></div>
        <div class="dock-item">200%</div>
      </div>
    </main>

    <aside class="inspector sheet flex-shrink-0">
      <div class="sheet-title">Inspector</div>

      <div class="pane">
        <div class="pane-head d-flex align-items-center">
          <svg class="pane-icon" width="18" height="18" viewBox="0 0 18 18"><circle cx="9" cy="9" r="9" fill="#0088ff"/><circle cx="9" cy="5" r="1.300" fill="#fff"/><path d="M7 8h2.800v5M7 13.300h5" fill="none" stroke="#fff" stroke-width="1.500"/></svg>
          Info
          <svg class="ms-auto" width="11" height="11"><use href="#chev-d"/></svg>
        </div>
        <div class="cap" style="margin-top:12px">Name</div>
        <input class="form-control name-input" type="text" placeholder="Name" />
        <div class="rule" style="margin-top:11px"></div>
        <div class="d-flex align-items-center val" style="height:45px">
          Type
          <svg class="ms-auto" width="21" height="17" style="color:#333;margin-right:13px"><use href="#box"/></svg>
          View
        </div>
      </div>

      <div class="pane">
        <div class="pane-head flat d-flex align-items-center">
          <svg class="pane-icon" width="19" height="19" viewBox="0 0 18 18" fill="none" stroke="#0088ff" stroke-width="2.100"><path d="M1.500 6.500V1.500H6.500M1.500 1.500l6.500 6.500M16.500 11.500v5H11.500M16.500 16.500L10 10"/></svg>
          Size
          <svg class="ms-auto" width="11" height="11"><use href="#chev-r"/></svg>
        </div>
      </div>

      <div class="pane">
        <div class="pane-head d-flex align-items-center">
          <svg class="pane-icon" width="21" height="17" viewBox="0 0 21 17" style="left:-39px"><rect x=".7" y=".7" width="19.600" height="15.600" rx="2.500" fill="#fff" stroke="#0088ff" stroke-width="1.400"/><circle cx="6" cy="5.500" r="2" fill="#0088ff"/><path d="M1 15l5.500-5 3 2 4-4 6.500 6v2H1z" fill="#0088ff"/></svg>
          Image
          <svg class="ms-auto" style="margin-right:6px" width="14" height="14"><use href="#plus-o"/></svg>
          <svg width="11" height="11"><use href="#chev-d"/></svg>
        </div>
        <div class="cap" style="margin-top:11px">Image</div>
        <div class="val d-flex align-items-center">Select image...<svg class="ms-auto" width="11" height="11" style="color:#999"><use href="#chev-r"/></svg></div>
        <div class="rule" style="margin-top:9px"></div>
        <div class="cap" style="margin-top:12px">System Icon</div>
        <div class="val d-flex align-items-center" style="margin-top:5px">Select System Icon...<svg class="ms-auto" width="11" height="11" style="color:#999"><use href="#chev-r"/></svg></div>
        <div class="rule" style="margin-top:10px"></div>
        <div class="d-flex align-items-center val" style="height:53px">
          Scale
          <span class="ms-auto" style="margin-right:8px">Scale...ect Fit</span>
          <svg width="9" height="13" viewBox="0 0 9 13" fill="none" stroke="#888" stroke-width="1.100"><path d="M1 4.500l3.500-3.500L8 4.500M1 8.500L4.500 12 8 8.500"/></svg>
        </div>
      </div>

      <div class="pane mb-0" style="margin-top:30px">
        <div class="pane-head d-flex align-items-center" style="height:51px">
          <svg class="pane-icon" width="21" height="23" viewBox="0 0 21 23" style="left:-38px"><g transform="rotate(40 10.500 11.500)" fill="#0088ff"><path d="M4 -2h13v7H4z"/><rect x="5" y="6" width="11" height="3"/><rect x="8" y="9.500" width="5" height="14" rx="2.500"/></g><circle cx="4.500" cy="19" r="1" fill="#ececec"/></svg>
          View
          <svg class="ms-auto" width="11" height="11"><use href="#chev-d"/></svg>
        </div>
        <div class="cap d-flex align-items-center" style="margin-top:12px">Background Color<svg class="ms-auto" width="13" height="13"><use href="#plus-o"/></svg></div>
        <div class="val d-flex align-items-center" style="margin-top:7px">System Background<svg class="ms-auto" width="11" height="11" style="color:#999"><use href="#chev-r"/></svg></div>
        <div class="val d-flex align-items-center" style="margin-top:7px">#FFFFFF<span class="swatch ms-auto" style="background:#fff"></span></div>
        <div class="rule" style="margin-top:13px"></div>
        <div class="cap d-flex align-items-center" style="margin-top:11px">Tint Color<svg class="ms-auto" width="13" height="13"><use href="#plus-o"/></svg></div>
        <div class="val d-flex align-items-center" style="margin-top:7px">Select Color...<svg class="ms-auto" width="11" height="11" style="color:#999"><use href="#chev-r"/></svg></div>
        <div class="val d-flex align-items-center" style="margin-top:8px">#0088FF<span class="swatch ms-auto" style="background:#0088ff"></span></div>
        <div class="rule" style="margin-top:12px"></div>
        <div class="val d-flex align-items-center" style="margin-top:12px;height:23px">
          <svg width="20" height="12" viewBox="0 0 20 12" style="margin-right:9px"><path d="M1 6c2.500-3.300 5.500-5 9-5s6.500 1.700 9 5c-2.500 3.300-5.500 5-9 5S3.500 9.300 1 6z" fill="none" stroke="#222" stroke-width="1.200"/><circle cx="10" cy="6" r="3.300" fill="#222"/></svg>
          Hidden
          <span class="toggle-off ms-auto"></span>
          <svg width="14" height="14" style="margin-left:7px;margin-right:1px"><use href="#plus-o"/></svg>
        </div>
        <div class="rule" style="margin-top:12px;margin-left:28px"></div>
        <div class="cap" style="margin-top:11px">Alpha</div>
        <div class="val d-flex align-items-center" style="margin-top:10px">
          0<span class="range-line"><span class="range-knob"></span></span>1
        </div>
      </div>
    </aside>
  </div>
</div>

<script src="https://cdn.jsdelivr.net/npm/bootstrap@5.3.0/dist/js/bootstrap.bundle.min.js"></script>
</body>
</html>
